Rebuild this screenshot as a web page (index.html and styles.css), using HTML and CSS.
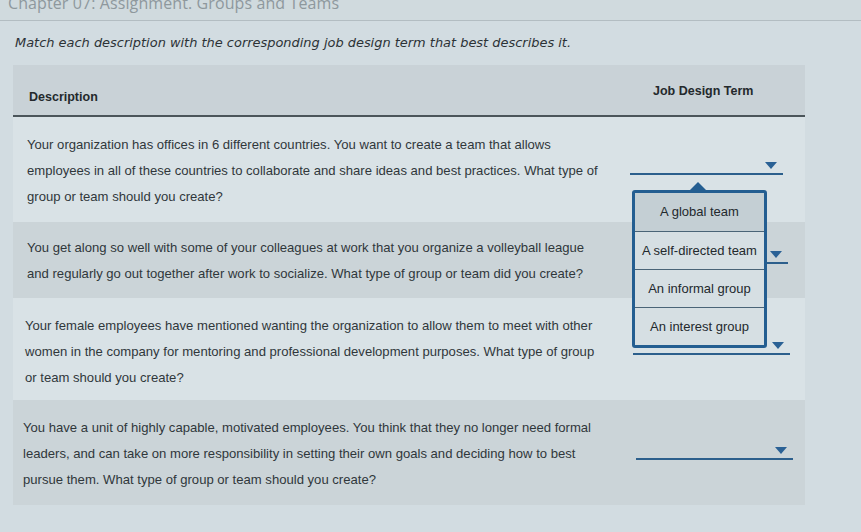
FILE: index.html
```html
<!DOCTYPE html>
<html>
<head>
<meta charset="utf-8">
<link rel="stylesheet" href="styles.css">
</head>
<body>
<div class="page">
  <div class="titlebar"><h1 class="title">Chapter 07: Assignment. Groups and Teams</h1></div>
  <p class="instr">Match each description with the corresponding job design term that best describes it.</p>
  <div class="table">
    <div class="head">
      <div class="hdesc">Description</div>
      <div class="hterm">Job Design Term</div>
    </div>
    <div class="row light r1">
      <div class="desc">Your organization has offices in 6 different countries. You want to create a team that allows<br>employees in all of these countries to collaborate and share ideas and best practices. What type of<br>group or team should you create?</div>
      <div class="term">
        <div class="dd"><span class="arrow"></span></div>
        <div class="popup">
          <span class="caret"></span>
          <div class="opt sel">A global team</div>
          <div class="opt">A self-directed team</div>
          <div class="opt">An informal group</div>
          <div class="opt">An interest group</div>
        </div>
      </div>
    </div>
    <div class="row dark r2">
      <div class="desc">You get along so well with some of your colleagues at work that you organize a volleyball league<br>and regularly go out together after work to socialize. What type of group or team did you create?</div>
      <div class="term"><div class="dd dd2"><span class="arrow"></span></div></div>
    </div>
    <div class="row light r3">
      <div class="desc">Your female employees have mentioned wanting the organization to allow them to meet with other<br>women in the company for mentoring and professional development purposes. What type of group<br>or team should you create?</div>
      <div class="term"><div class="dd dd3"><span class="arrow"></span></div></div>
    </div>
    <div class="row dark r4">
      <div class="desc">You have a unit of highly capable, motivated employees. You think that they no longer need formal<br>leaders, and can take on more responsibility in setting their own goals and deciding how to best<br>pursue them. What type of group or team should you create?</div>
      <div class="term"><div class="dd dd4"><span class="arrow"></span></div></div>
    </div>
  </div>
</div>
</body>
</html>
```
FILE: styles.css
```css
html, body {
  margin: 0;
  padding: 0;
  background: #d2dce1;
}
.page {
  width: 861px;
  height: 532px;
  overflow: hidden;
  position: relative;
  font-family: "Liberation Sans", Arial, sans-serif;
  color: #2e3438;
}
.titlebar {
  height: 20px;
  border-bottom: 1px solid #b3bdc2;
  overflow: hidden;
  background: #d0dade;
}
.title {
  margin: -8px 0 0 8px;
  font-family: "Open Sans", "Liberation Sans", sans-serif;
  font-weight: 400;
  font-size: 16px;
  line-height: 22px;
  color: #8e989d;
  letter-spacing: 0.1px;
}
.instr {
  margin: 14px 0 0 15px;
  font-family: "DejaVu Sans", Verdana, sans-serif;
  font-style: italic;
  font-size: 12.95px;
  line-height: 16px;
  color: #2c3236;
  white-space: nowrap;
}
.table {
  margin: 14px 0 0 13px;
  width: 792px;
}
.head {
  display: flex;
  height: 50px;
  background: #c9d2d7;
  border-bottom: 2px solid #4b555a;
  font-weight: 700;
  font-size: 12.5px;
  color: #24292c;
}
.hdesc {
  width: 602px;
  padding: 25px 0 0 16px;
  box-sizing: border-box;
}
.hterm {
  flex: 1;
  padding: 19px 0 0 38px;
  box-sizing: border-box;
}
.row {
  display: flex;
  position: relative;
}
.light { background: #d9e2e6; }
.dark { background: #cbd4d8; }
.desc {
  width: 602px;
  box-sizing: border-box;
  padding: 15px 0 12px 14px;
  font-size: 13.1px;
  line-height: 26px;
  color: #30373b;
  white-space: nowrap;
}
.r2 .desc { padding-top: 13px; padding-bottom: 11px; }
.r3 .desc { padding-left: 12px; padding-top: 15px; padding-bottom: 9px; }
.r4 .desc { padding-left: 10px; padding-top: 15px; padding-bottom: 12px; }
.term {
  flex: 1;
  position: relative;
}
.dd {
  position: relative;
  margin: 56px 0 0 15px;
  width: 153px;
  height: 0;
  border-bottom: 2px solid #2c5f8c;
}
.dd2 { margin-top: 40px; margin-left: 18px; width: 155px; }
.dd3 { margin-top: 55px; margin-left: 18px; width: 157px; }
.dd4 { margin-top: 58px; margin-left: 21px; width: 157px; }
.arrow {
  position: absolute;
  right: 6px;
  top: -11px;
  width: 0;
  height: 0;
  border-left: 6px solid transparent;
  border-right: 6px solid transparent;
  border-top: 7px solid #2a6195;
}
.popup {
  position: absolute;
  left: 17px;
  top: 73px;
  width: 129px;
  border: 3px solid #245e91;
  border-radius: 3px;
  background: #d6dfe3;
  z-index: 5;
}
.caret {
  position: absolute;
  left: 55px;
  top: -11px;
  width: 0;
  height: 0;
  border-left: 8px solid transparent;
  border-right: 8px solid transparent;
  border-bottom: 8px solid #245e91;
}
.opt {
  height: 37px;
  line-height: 37px;
  text-align: center;
  font-size: 13px;
  color: #23292d;
  border-top: 1px solid #4a6477;
}
.opt:first-of-type { border-top: none; height: 38px; }
.sel { background: #c4cfd4; }
```
